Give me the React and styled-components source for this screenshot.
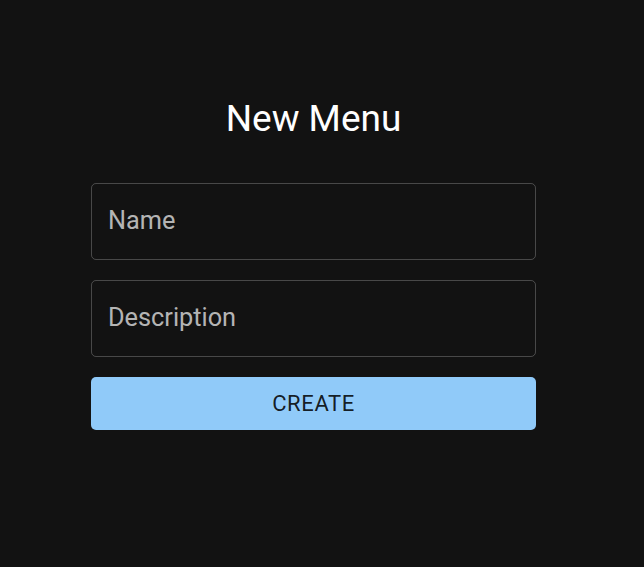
import React from 'react';
import styled, { createGlobalStyle } from 'styled-components';

const GlobalStyle = createGlobalStyle`
  html, body {
    margin: 0;
    padding: 0;
    background-color: #121212;
  }
  body {
    font-family: Roboto, "Liberation Sans", Arial, sans-serif;
  }
`;

const Page = styled.div`
  width: calc(100% - 17px);
  min-height: 567px;
  display: flex;
  justify-content: center;
  box-sizing: border-box;
  padding-top: 94px;
`;

const Form = styled.form`
  width: 445px;
  display: flex;
  flex-direction: column;
  gap: 20px;
`;

const Title = styled.h1`
  margin: 0 0 20px;
  font-size: 37px;
  font-weight: 400;
  line-height: 49px;
  color: #fff;
  text-align: center;
`;

const Field = styled.input`
  height: 77px;
  box-sizing: border-box;
  padding: 0 16px 2px;
  border: 1px solid rgba(255, 255, 255, 0.23);
  border-radius: 5px;
  background: transparent;
  color: #fff;
  font-family: inherit;
  font-size: 25.3px;
  outline: none;

  &::placeholder {
    color: rgba(255, 255, 255, 0.7);
  }
`;

const SubmitButton = styled.button`
  height: 53px;
  border: 0;
  border-radius: 5px;
  background-color: #90caf9;
  color: rgba(0, 0, 0, 0.87);
  font-family: inherit;
  font-size: 22px;
  font-weight: 400;
  letter-spacing: 0.02857em;
  text-transform: uppercase;
  cursor: pointer;
`;

export default function App() {
  return (
    <>
      <GlobalStyle />
      <Page>
        <Form onSubmit={(e) => e.preventDefault()}>
          <Title>New Menu</Title>
          <Field placeholder="Name" />
          <Field placeholder="Description" />
          <SubmitButton type="submit">Create</SubmitButton>
        </Form>
      </Page>
    </>
  );
}
